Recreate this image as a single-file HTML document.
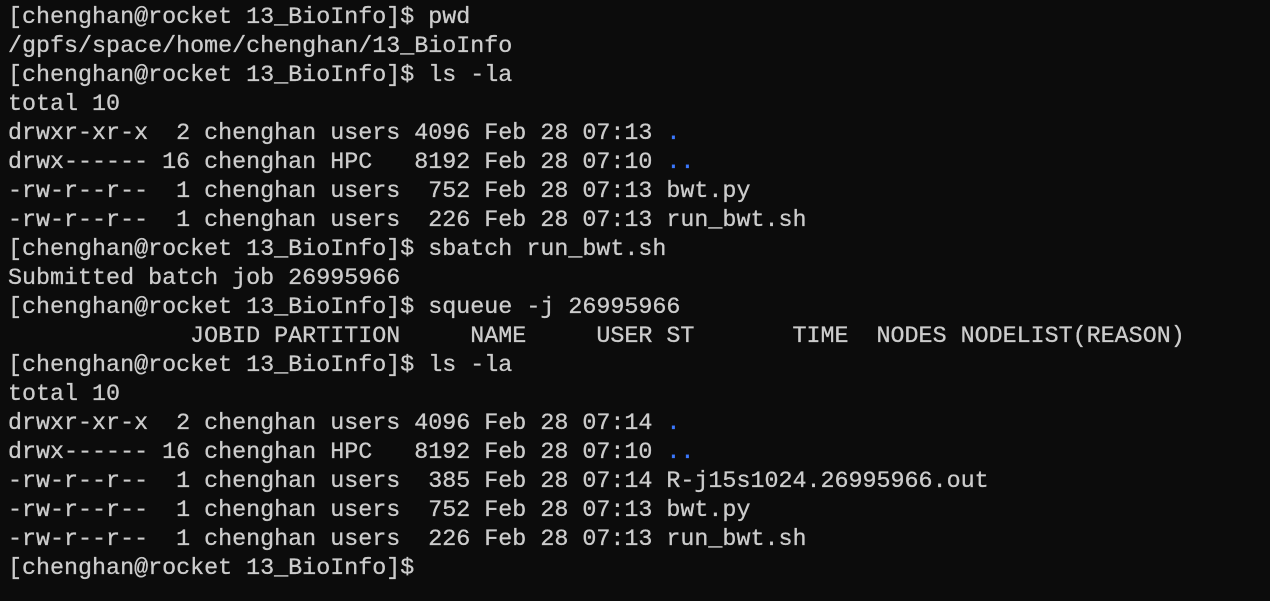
<!DOCTYPE html>
<html><head><style>
html,body{margin:0;padding:0;background:#0c0c0c;width:1270px;height:601px;overflow:hidden}
pre{margin:0;padding:4px 0 0 8px;font-family:"Liberation Mono",monospace;font-size:23.35px;line-height:29px;color:#cccccc;white-space:pre;-webkit-text-stroke:0.3px #cccccc}
.b{color:#3b78ff;-webkit-text-stroke:0.3px #3b78ff}
</style></head><body><pre>[chenghan@rocket 13_BioInfo]$ pwd
/gpfs/space/home/chenghan/13_BioInfo
[chenghan@rocket 13_BioInfo]$ ls -la
total 10
drwxr-xr-x  2 chenghan users 4096 Feb 28 07:13 <span class="b">.</span>
drwx------ 16 chenghan HPC   8192 Feb 28 07:10 <span class="b">..</span>
-rw-r--r--  1 chenghan users  752 Feb 28 07:13 bwt.py
-rw-r--r--  1 chenghan users  226 Feb 28 07:13 run_bwt.sh
[chenghan@rocket 13_BioInfo]$ sbatch run_bwt.sh
Submitted batch job 26995966
[chenghan@rocket 13_BioInfo]$ squeue -j 26995966
             JOBID PARTITION     NAME     USER ST       TIME  NODES NODELIST(REASON)
[chenghan@rocket 13_BioInfo]$ ls -la
total 10
drwxr-xr-x  2 chenghan users 4096 Feb 28 07:14 <span class="b">.</span>
drwx------ 16 chenghan HPC   8192 Feb 28 07:10 <span class="b">..</span>
-rw-r--r--  1 chenghan users  385 Feb 28 07:14 R-j15s1024.26995966.out
-rw-r--r--  1 chenghan users  752 Feb 28 07:13 bwt.py
-rw-r--r--  1 chenghan users  226 Feb 28 07:13 run_bwt.sh
[chenghan@rocket 13_BioInfo]$ </pre></body></html>
